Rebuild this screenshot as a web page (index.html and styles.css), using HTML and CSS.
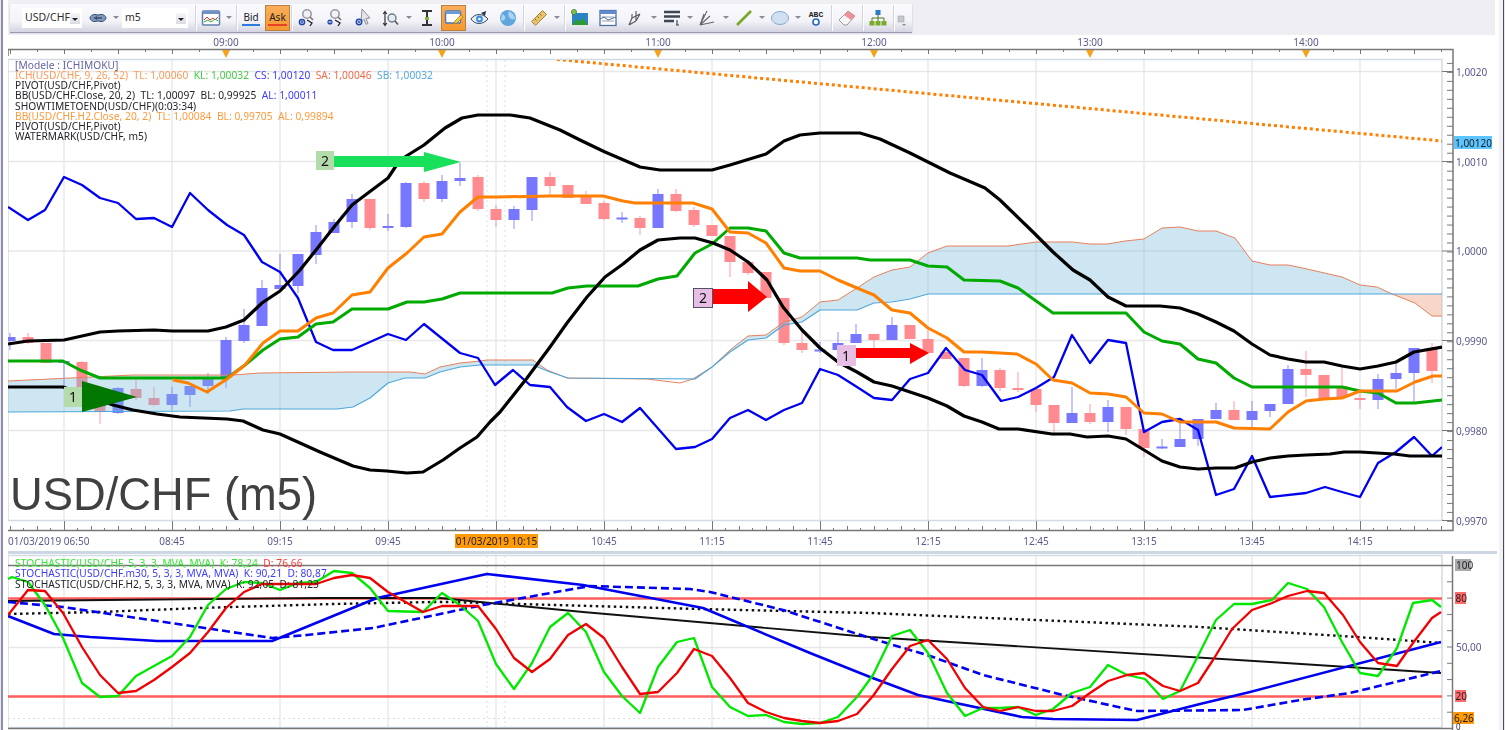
FILE: index.html
```html
<!DOCTYPE html>
<html lang="en">
<head>
    <meta charset="UTF-8">
    <title>USD/CHF m5</title>
    <link rel="stylesheet" href="styles.css">
</head>
<body>
<div class="app">
    <div class="edge-left"></div>
    <div class="content">

        <!-- top toolbar -->
        <div class="topband">
            <div class="toolbar">
                <div class="combo combo-pair">USD/CHF<span class="combo-arrow"></span></div>
                <div class="btn btn-link"><svg viewBox="0 0 20 20"><ellipse cx="7" cy="10" rx="5" ry="3.6" fill="#7f98bb" stroke="#3c557c"/><ellipse cx="13" cy="10" rx="5" ry="3.6" fill="#7f98bb" stroke="#3c557c"/><path d="M6 10h8" stroke="#223" stroke-width="1"/></svg></div>
                <span class="dd"></span>
                <div class="combo combo-tf">m5<span class="combo-arrow"></span></div>
                <span class="sep sep-first"></span>
                <div class="btn"><svg viewBox="0 0 20 20"><rect x="1.5" y="3" width="17" height="14" rx="1" fill="#fff" stroke="#5f80ad" stroke-width="1.5"/><rect x="1.5" y="3" width="17" height="3" fill="#6f93c4"/><path d="M3 12l3-3 3 3 3-2 2 2 3-3" fill="none" stroke="#d83a3a"/><path d="M3 14l4-2 3 2 4-3 3 2" fill="none" stroke="#3aa83a"/></svg></div>
                <span class="dd dd-end"></span>
                <span class="sep"></span>
                <div class="btn btn-bid"><span class="price-side side-bid">Bid</span></div>
                <div class="btn btn-on btn-ask"><span class="price-side side-ask">Ask</span></div>
                <span class="sep"></span>
                <div class="btn"><svg viewBox="0 0 20 20"><circle cx="10" cy="6" r="4.2" fill="#f2f2f6" stroke="#9a9aa4" stroke-width="1.6"/><path d="M13 9l3 3" stroke="#777" stroke-width="1.6"/><circle cx="5" cy="14" r="2.6" fill="#fff" stroke="#1f46a8" stroke-width="1.5"/><path d="M3.5 14h3M5 12.5v3" stroke="#1f46a8"/><path d="M10 12l5 3-2 3" fill="none" stroke="#223" stroke-width="1.3"/></svg></div>
                <div class="btn"><svg viewBox="0 0 20 20"><circle cx="10" cy="6" r="4.2" fill="#f2f2f6" stroke="#9a9aa4" stroke-width="1.6"/><path d="M13 9l3 3" stroke="#777" stroke-width="1.6"/><circle cx="5" cy="14" r="2.6" fill="#1f46a8"/><path d="M3.5 14h3" stroke="#fff"/><path d="M10 12l5 3-2 3" fill="none" stroke="#223" stroke-width="1.3"/></svg></div>
                <div class="btn"><svg viewBox="0 0 20 20"><path d="M9 1l8 9-4 .5 2 5-2 .8-2-5-3 3z" fill="#e4e4ea" stroke="#8f8f99"/><circle cx="6" cy="14" r="2.7" fill="#fff" stroke="#1f46a8" stroke-width="1.5"/><path d="M4.5 14h3M6 12.500v3" stroke="#1f46a8"/></svg></div>
                <div class="btn"><svg viewBox="0 0 20 20"><path d="M4 4v13M2.200 6L4 3.500 5.800 6M2.200 15L4 17.500 5.800 15" fill="none" stroke="#333" stroke-width="1.200"/><circle cx="11" cy="10" r="4" fill="#e4edf5" stroke="#6b7a86" stroke-width="1.400"/><path d="M14 13l3 3.500" stroke="#555" stroke-width="1.600"/></svg></div>
                <span class="dd"></span>
                <div class="btn"><svg viewBox="0 0 20 20"><path d="M5 3h10M5 17h10" stroke="#333" stroke-width="1.800"/><path d="M10 3v14" stroke="#333" stroke-width="2"/><path d="M8 9h4v3H8z" fill="#7fb23a"/></svg></div>
                <div class="btn btn-on btn-note"><svg viewBox="0 0 20 20"><rect x="1.500" y="3" width="15" height="12" rx="1" fill="#fff" stroke="#4a78b8" stroke-width="1.500"/><rect x="1.500" y="3" width="15" height="3" fill="#6f9ad4"/><path d="M10 16l1-3 6-6 2 2-6 6z" fill="#f7c93a" stroke="#a8791c" stroke-width=".8"/></svg></div>
                <div class="btn"><svg viewBox="0 0 20 20"><path d="M1 11c4-6 12-6 17 0-5 6-13 6-17 0z" fill="#e6edf5" stroke="#3a4a60"/><circle cx="9.500" cy="11" r="3.400" fill="#3f8fdc"/><circle cx="9.500" cy="11" r="1.300" fill="#fff"/><path d="M11 5l5-2-1 5z" fill="#22304a"/></svg></div>
                <div class="btn"><svg viewBox="0 0 20 20"><circle cx="10" cy="10" r="8" fill="#5ea6dc"/><path d="M4 6c3 1 4 3 3 5s-3 2-4 1M11 3c3 2 6 4 6 8-2 1-5 0-6-2s-1-4 0-6z" fill="#a9d3ef"/></svg></div>
                <span class="sep"></span>
                <div class="btn"><svg viewBox="0 0 20 20"><path d="M13.500 2.500l4 4-11 11-4-4z" fill="#e8c26a" stroke="#a8873a"/><path d="M11 6l1.500 1.500M8.500 8.500L10 10M6 11l1.500 1.500" stroke="#8a6a22"/></svg></div>
                <span class="dd dd-end"></span>
                <span class="sep"></span>
                <div class="btn"><svg viewBox="0 0 20 20"><rect x="2" y="5" width="16" height="12" fill="#2b82c4"/><path d="M2 17l5-6 3 3 3-4 5 7z" fill="#2e9a2e"/><circle cx="4" cy="4" r="2.600" fill="#7fc24a" stroke="#3f7a1f" stroke-width=".7"/></svg></div>
                <div class="btn"><svg viewBox="0 0 20 20"><rect x="2" y="2.500" width="16" height="15" fill="#fff" stroke="#4a70a8" stroke-width="1.300"/><rect x="2" y="2.500" width="16" height="3.500" fill="#5f8bc8"/><path d="M4 9h12M4 13h12" stroke="#8aa0bc"/><path d="M2 11l4-2 4 3 8-3" fill="none" stroke="#5d6f88"/></svg></div>
                <div class="btn"><svg viewBox="0 0 20 20"><path d="M3 17l3-7M3 17l7-4M10 3v10M6 6v4M14 6l-4 7M10 8l4-2M6 10l4-2" fill="none" stroke="#55555c" stroke-width="1.100"/></svg></div>
                <span class="dd"></span>
                <div class="btn"><svg viewBox="0 0 20 20"><path d="M2 4h16M2 8.500h16M2 13h10" stroke="#3f4552" stroke-width="2.400"/><path d="M15 12v5M14 17h3" stroke="#3f4552" stroke-width="1.200"/></svg></div>
                <span class="dd"></span>
                <div class="btn"><svg viewBox="0 0 20 20"><path d="M2 17L9 3M2 17l10-9M2 17l14-3M2 17L6 6" fill="none" stroke="#66666e" stroke-width="1.100"/></svg></div>
                <span class="dd"></span>
                <div class="btn"><svg viewBox="0 0 20 20"><path d="M3 17L17 3" stroke="#78a82a" stroke-width="2.600"/></svg></div>
                <span class="dd"></span>
                <div class="btn"><svg viewBox="0 0 20 20"><ellipse cx="10" cy="10" rx="8.500" ry="6.500" fill="#cfe0f2" stroke="#8ba8c8"/></svg></div>
                <span class="dd"></span>
                <div class="btn btn-abc"><span class="abc">ABC</span><svg class="abc-dot" viewBox="0 0 8 8"><circle cx="4" cy="4" r="3" fill="#fff" stroke="#1f6ac8" stroke-width="1.600"/></svg></div>
                <span class="sep"></span>
                <div class="btn"><svg viewBox="0 0 20 20"><path d="M2 12l9-9 7 5-8 9H7z" fill="#f7f7f7" stroke="#9a9a9a"/><path d="M7 7l4-4 7 5-4 4z" fill="#ee8f9a"/></svg></div>
                <span class="sep"></span>
                <div class="btn"><svg viewBox="0 0 20 20"><rect x="7.500" y="2" width="5" height="5" fill="#2a78c8"/><path d="M10 7v3M4 13v-3h12v3M10 10v3" fill="none" stroke="#4a7a1f"/><rect x="1.500" y="13" width="5" height="4.500" fill="#7aaa2a"/><rect x="7.500" y="13" width="5" height="4.500" fill="#7aaa2a"/><rect x="13.500" y="13" width="5" height="4.500" fill="#7aaa2a"/></svg></div>
                <span class="sep"></span>
                <div class="grip"><svg viewBox="0 0 10 14"><rect x="1" y="2" width="6" height="6" fill="#c6c6ce" stroke="#a4a4ae" stroke-width=".6"/><path d="M5 10h4l-2 2z" fill="#88889a"/></svg></div>
            </div>
        </div>

        <!-- price chart -->
        <div class="pane pane-main">
            <svg class="chart" viewBox="8 35 1491 516">
                <defs>
                    <clipPath id="plot"><rect x="8" y="60" width="1434" height="460"/></clipPath>
                    <pattern id="topTicks" patternUnits="userSpaceOnUse" x="10" y="49" width="54" height="8">
                        <path class="tick" d="M.5 0v5M27.500 0v3"/>
                    </pattern>
                    <pattern id="bottomTicks" patternUnits="userSpaceOnUse" x="10" y="520" width="108" height="11">
                        <path class="tick" d="M54.500 1v10M27.500 6v5M81.500 6v5M.5 6v5M13.500 8v3M40.500 8v3M67.500 8v3M94.500 8v3"/>
                    </pattern>
                    <pattern id="priceTicks" patternUnits="userSpaceOnUse" x="1446" y="62.900" width="8" height="8.980">
                        <path class="tick" d="M1 .5h6"/>
                    </pattern>
                </defs>

                <!-- top time ruler -->
                <text class="axis-text" x="226" y="45.500" text-anchor="middle">09:00</text>
                <text class="axis-text" x="442" y="45.500" text-anchor="middle">10:00</text>
                <text class="axis-text" x="658" y="45.500" text-anchor="middle">11:00</text>
                <text class="axis-text" x="874" y="45.500" text-anchor="middle">12:00</text>
                <text class="axis-text" x="1090" y="45.500" text-anchor="middle">13:00</text>
                <text class="axis-text" x="1306" y="45.500" text-anchor="middle">14:00</text>
                <rect x="10" y="49" width="1440" height="6" fill="url(#topTicks)"/>
                <path class="axis" d="M8 56V49.500H1453V531M8 530.500H1453"/>
                <path class="marker" d="M222 50h8l-4 8zM438 50h8l-4 8zM654 50h8l-4 8zM870 50h8l-4 8zM1086 50h8l-4 8zM1302 50h8l-4 8z"/>

                <!-- plot background -->
                <path class="grid" d="M64 60V520M172 60V520M280 60V520M388 60V520M496 60V520M604 60V520M712 60V520M820 60V520M928 60V520M1036 60V520M1144 60V520M1252 60V520M1360 60V520"/>
                <path class="grid" d="M8 71.500H1442M8 161.500H1442M8 251H1442M8 340.500H1442M8 430.500H1442"/>
                <path class="cursor" d="M487 60V520M505 60V520"/>
                <rect class="frame" x="8" y="59.500" width="1434" height="461"/>

                <g clip-path="url(#plot)">
                    <!-- candles -->
                    <path class="wick wick-red" d="M28 333V344M82 361V388M100 390V424M136 377V400M154 387V406M370 199V230M424 181V202M478 175V211M496 205V227M550 172V195M586 191V204M604 201V220M640 216V235M676 189V212M694 207V227M730 236V277M748 262V275M784 298V345M802 330V353M874 334V348M928 330V353M964 358V387M1000 368V391M1018 372V392M1036 389V412M1054 405V436M1090 404V424M1126 407V435M1144 429V457M1234 401V420M1306 351V397M1342 365V397M1360 392V409M1432 343V383"/>
                    <path class="wick wick-blue" d="M10 333V350M64 361V387M118 387V414M172 387V410M190 386V407M208 373V394M226 337V388M244 309V343M262 280V326M280 254V289M298 254V293M316 225V264M334 219V233M352 194V228M388 214V231M406 182V228M442 175V202M460 163V186M514 206V229M532 177V221M622 212V223M658 189V228M820 342V353M838 332V350M856 324V343M892 317V340M982 358V387M1072 387V423M1108 400V432M1162 439V449M1180 420V447M1198 419V446M1216 403V419M1252 401V430M1270 404V417M1288 365V404M1378 374V409M1396 363V389M1414 348V402"/>
                    <path class="body body-red" d="M28 337V343M46 343V363M82 362V387M100 395V412M136 389V398M154 398V405M370 199V228M424 183V199M478 177V209M496 209V220M550 177V186M568 185V198M586 195V204M604 203V219M640 218V228M676 194V211M694 210V225M712 225V236M730 236V262M748 262V273M766 272V298M784 298V343M802 343V350M874 334V340M910 325V339M928 339V353M946 352V359M964 358V386M1000 370V388M1018 388V390M1036 389V405M1054 405V423M1090 413V422M1126 407V429M1144 429V448M1234 410V420M1306 369V375M1324 375V398M1342 386V397M1360 398V400M1432 348V371"/>
                    <path class="body body-blue" d="M10 337V341M64 361V363M118 388V413M172 394V405M190 386V395M208 377V386M226 340V378M244 325V341M262 288V326M280 285V289M298 254V286M316 232V255M334 222V233M352 199V222M388 226V228M406 183V227M442 181V199M460 178V181M514 209V220M532 177V210M622 217.500V219.500M658 194V228M820 349.500V351.500M838 343V350M856 334V343M892 325V340M982 370V386M1072 413V423M1108 407V422M1162 446.500V448.500M1180 439V447M1198 419V439M1216 410V419M1252 411V420M1270 404V411M1288 369V404M1378 379V400M1396 373V379M1414 348V373"/>

                    <!-- ichimoku cloud -->
                    <path class="cloud" d="M8 381 133 375 233 375 260 373 350 372 410 372 425 374 440 367 460 363 480 361 487 360 533 360 547 370 567 378 693 378 712 367 730 350 748 336 766 335 784 322 802 317 820 302 838 300 857 288 874 277 892 270 910 267 928 253 947 246 1008 246 1036 242 1072 242 1090 244 1108 244 1125 241 1144 239 1162 228 1180 227 1198 231 1216 231 1235 238 1252 261 1270 265 1288 265 1307 269 1342 277 1360 285 1377 287 1392 294 928 294 910 299 892 302 874 303 857 310 820 310 802 322 784 325 766 338 748 340 730 352 712 367 695 379 568 378 550 372 533 365 487 365 480 365 460 367 440 372 425 378 405 378 388 383 370 398 353 407 337 409 243 409 230 411 8 412z"/>
                    <path class="cloud-low" d="M1392 294 1415 303 1432 316 1442 316V294z"/>
                    <polyline class="span-a" points="8,381 133,375 233,375 260,373 350,372 410,372 425,374 440,367 460,363 480,361 487,360 533,360 547,370 567,378 647,379 680,383 693,379 712,367 730,350 748,336 766,335 784,322 802,317 820,302 838,300 857,288 874,277 892,270 910,267 928,253 947,246 1008,246 1036,242 1072,242 1090,244 1108,244 1125,241 1144,239 1162,228 1180,227 1198,231 1216,231 1235,238 1252,261 1270,265 1288,265 1307,269 1342,277 1360,285 1377,287 1392,294 1415,303 1432,316 1442,316"/>
                    <polyline class="span-b" points="8,412 230,411 243,409 337,409 353,407 370,398 388,383 405,378 425,378 440,372 460,367 480,365 487,365 533,365 550,372 568,378 695,379 712,367 730,352 748,340 766,338 784,325 802,322 820,310 857,310 874,303 892,302 910,299 928,294 1442,294"/>

                    <!-- chikou -->
                    <polyline class="line-blue" points="8,207 28,220 45,210 64,177 82,185 100,198 118,203 136,219 154,218 172,227 190,193 208,210 227,225 244,235 262,262 280,272 298,298 316,342 333,350 352,350 388,334 406,340 424,324 460,353 478,358 495,385 513,370 530,385 550,387 567,407 586,421 604,414 622,422 640,408 676,449 695,447 712,439 730,418 748,410 766,420 784,410 802,403 820,369 838,375 857,387 874,398 892,400 910,379 928,373 946,348 965,370 982,375 1001,401 1018,397 1036,388 1054,377 1072,335 1090,363 1108,340 1126,343 1144,432 1162,422 1180,419 1198,430 1216,495 1234,489 1252,456 1270,497 1306,493 1325,487 1342,492 1360,497 1378,463 1396,452 1414,437 1432,456 1442,447"/>
                    <!-- kijun and tenkan -->
                    <polyline class="line-green" points="8,361 63,361 80,370 100,378 227,378 245,365 263,350 280,339 298,337 316,324 333,322 352,309 388,309 407,302 424,302 442,299 460,293 552,293 568,288 587,286 638,286 658,279 677,276 695,253 712,244 730,228 748,228 766,231 784,253 800,258 857,258 870,260 910,260 928,266 947,267 964,280 1000,281 1018,288 1053,313 1126,313 1144,332 1162,341 1180,344 1198,359 1216,363 1234,378 1252,387 1342,387 1360,391 1378,393 1396,403 1415,403 1442,400"/>
                    <polyline class="line-orange" points="173,380 188,383 207,392 227,379 245,365 263,343 280,331 298,331 316,318 333,313 352,295 370,292 388,268 407,253 424,237 442,234 460,212 478,197 497,197 550,196 603,196 623,201 635,203 693,203 712,209 730,232 748,233 766,243 784,268 800,271 820,271 838,280 857,288 874,295 892,310 910,313 928,328 947,338 964,352 982,352 1000,353 1017,354 1036,364 1053,380 1072,383 1090,393 1108,394 1126,397 1144,413 1162,414 1180,422 1216,422 1234,428 1270,429 1288,412 1306,401 1324,399 1342,398 1360,391 1397,391 1415,382 1433,376 1442,376"/>
                    <!-- bollinger bands -->
                    <polyline class="line-black" points="8,344 28,341 64,340 100,332 118,331 154,330 172,331 208,331 226,327 244,320 262,303 280,291 300,270 316,250 334,227 352,205 388,178 400,160 424,145 445,128 462,118 478,115 510,115 530,118 560,130 580,140 605,152 640,167 660,170 712,170 730,165 766,154 784,141 800,135 820,133 860,133 880,139 910,153 950,173 985,188 1000,200 1033,232 1053,252 1073,270 1090,280 1108,297 1126,306 1160,306 1180,308 1198,314 1216,322 1234,331 1252,344 1270,355 1288,359 1306,362 1324,362 1342,366 1360,369 1378,366 1396,362 1414,352 1442,347"/>
                    <polyline class="line-black" points="8,387 63,387 113,405 133,410 157,414 180,417 227,419 243,421 263,430 280,434 300,443 320,452 353,466 370,470 387,471 407,473 423,472 443,460 460,448 477,437 490,422 500,412 527,378 550,347 567,323 587,297 605,277 623,264 640,250 658,240 680,238 695,238 713,243 730,250 748,262 767,280 783,307 802,330 820,348 838,362 857,372 874,382 892,386 910,392 928,398 947,406 964,416 982,422 999,429 1018,429 1052,434 1070,434 1087,437 1108,436 1126,439 1144,450 1162,461 1180,467 1198,469 1216,468 1235,468 1252,462 1270,458 1288,456 1306,455 1330,454 1344,452 1360,452 1377,453 1394,454 1410,456 1442,456"/>
                    <!-- trend line -->
                    <line class="line-trend" x1="557" y1="59.500" x2="1442" y2="141"/>

                    <text class="watermark" x="10" y="510">USD/CHF (m5)</text>

                    <!-- drawn signals -->
                    <rect class="tag tag-green" x="64" y="387" width="18" height="20"/>
                    <text class="tag-text" x="73" y="402" text-anchor="middle">1</text>
                    <path class="arrow-dark" d="M82 381V412L137 397z"/>
                    <rect class="tag tag-green" x="316" y="151" width="18" height="19"/>
                    <text class="tag-text" x="325" y="166" text-anchor="middle">2</text>
                    <path class="arrow-lime" d="M334 156H424V152L461 162 424 172V167H334z"/>
                    <rect class="tag tag-pink tag-line" x="693.500" y="288.500" width="19" height="19"/>
                    <text class="tag-text" x="703" y="303" text-anchor="middle">2</text>
                    <path class="arrow-red" d="M713 289H748V281L767 297 748 312V304H713z"/>
                    <rect class="tag tag-pink" x="837" y="345" width="19" height="21"/>
                    <text class="tag-text" x="846" y="361" text-anchor="middle">1</text>
                    <path class="arrow-red" d="M856 348H910V343L929 353 910 364V358H856z"/>
                </g>

                <!-- price axis -->
                <rect x="1446" y="60" width="8" height="470" fill="url(#priceTicks)"/>
                <path class="tick" d="M1442 71.500H1453M1442 161.500H1453M1442 251H1453M1442 340.500H1453M1442 430.500H1453M1442 520.500H1453"/>
                <text class="axis-text" x="1456" y="75.500">1,0020</text>
                <text class="axis-text" x="1456" y="165.500">1,0010</text>
                <text class="axis-text" x="1456" y="255">1,0000</text>
                <text class="axis-text" x="1456" y="344.500">0,9990</text>
                <text class="axis-text" x="1456" y="434.500">0,9980</text>
                <text class="axis-text" x="1456" y="524.500">0,9970</text>
                <rect class="price-box" x="1454" y="136" width="38" height="13"/>
                <text class="axis-text axis-dark" x="1455" y="146.500">1,00120</text>

                <!-- bottom time axis -->
                <rect x="10" y="520" width="1440" height="11" fill="url(#bottomTicks)"/>
                <text class="axis-text" x="8" y="545">01/03/2019 06:50</text>
                <text class="axis-text" x="172" y="545" text-anchor="middle">08:45</text>
                <text class="axis-text" x="280" y="545" text-anchor="middle">09:15</text>
                <text class="axis-text" x="388" y="545" text-anchor="middle">09:45</text>
                <rect class="time-box" x="455" y="534" width="83" height="14"/>
                <text class="axis-text axis-dark" x="496.500" y="545" text-anchor="middle">01/03/2019 10:15</text>
                <text class="axis-text" x="604" y="545" text-anchor="middle">10:45</text>
                <text class="axis-text" x="712" y="545" text-anchor="middle">11:15</text>
                <text class="axis-text" x="820" y="545" text-anchor="middle">11:45</text>
                <text class="axis-text" x="928" y="545" text-anchor="middle">12:15</text>
                <text class="axis-text" x="1036" y="545" text-anchor="middle">12:45</text>
                <text class="axis-text" x="1144" y="545" text-anchor="middle">13:15</text>
                <text class="axis-text" x="1252" y="545" text-anchor="middle">13:45</text>
                <text class="axis-text" x="1360" y="545" text-anchor="middle">14:15</text>
            </svg>

            <div class="legend legend-main">
                <div class="c-title">[Modele : ICHIMOKU]</div>
                <div><span class="c-ich">ICH(USD/CHF, 9, 26, 52)&nbsp; TL: 1,00060</span>&nbsp; <span class="c-kl">KL: 1,00032</span>&nbsp; <span class="c-cs">CS: 1,00120</span>&nbsp; <span class="c-sa">SA: 1,00046</span>&nbsp; <span class="c-sb">SB: 1,00032</span></div>
                <div>PIVOT(USD/CHF,Pivot)</div>
                <div>BB(USD/CHF.Close, 20, 2)&nbsp; TL: 1,00097&nbsp; BL: 0,99925&nbsp; <span class="c-cs">AL: 1,00011</span></div>
                <div>SHOWTIMETOEND(USD/CHF)(0:03:34)</div>
                <div class="c-bb2">BB(USD/CHF.H2.Close, 20, 2)&nbsp; TL: 1,00084&nbsp; BL: 0,99705&nbsp; AL: 0,99894</div>
                <div>PIVOT(USD/CHF,Pivot)</div>
                <div>WATERMARK(USD/CHF, m5)</div>
            </div>
        </div>

        <div class="divider"></div>

        <!-- stochastic pane -->
        <div class="pane pane-sub">
            <svg class="chart" viewBox="8 554 1491 176">
                <defs>
                    <clipPath id="plotSub"><rect x="8" y="556" width="1434" height="172"/></clipPath>
                    <pattern id="subTicks" patternUnits="userSpaceOnUse" x="1446" y="565" width="8" height="16.300">
                        <path class="tick" d="M1 .5h6"/>
                    </pattern>
                </defs>
                <path class="grid" d="M64 556V728M172 556V728M280 556V728M388 556V728M496 556V728M604 556V728M712 556V728M820 556V728M928 556V728M1036 556V728M1144 556V728M1252 556V728M1360 556V728"/>
                <path class="grid" d="M8 647.500H1442"/>
                <path class="cursor" d="M487 556V728M505 556V728M8 718.500H1442"/>
                <rect class="frame" x="8" y="555.500" width="1434" height="172"/>
                <path class="axis" d="M8 565.500H1453M8 728.500H1453M1452.500 556V730"/>
                <path class="level" d="M8 598.500H1442M8 696.500H1442"/>

                <g clip-path="url(#plotSub)">
                    <polyline class="stoch-black" points="8,601 107,600 323,598 440,598 500,604 583,612 870,637 1270,662 1441,673"/>
                    <polyline class="stoch-dotted" points="8,614 100,612 200,608 333,604 433,602 450,602 590,606 700,609 870,613 1037,620 1200,627 1357,637 1441,643"/>
                    <polyline class="stoch-blue" points="8,616 54,634 90,637 157,641 272,641 377,598 487,574 583,585 703,608 810,653 870,677 918,695 1022,717 1053,719 1137,720 1200,704 1250,692 1441,642"/>
                    <polyline class="stoch-dashed" points="8,602 63,607 272,638 307,635 373,628 483,605 590,586 690,589 710,592 783,610 870,638 930,656 983,675 1063,695 1137,711 1243,710 1300,700 1350,693 1441,671"/>
                    <polyline class="stoch-green" points="8,579 12,577 28,582 45,605 63,638 82,683 100,697 118,696 136,676 154,666 172,656 190,637 208,605 226,589 244,582 262,583 280,590 298,583 316,582 334,571 352,573 370,588 388,611 423,612 442,593 460,605 478,621 496,664 514,689 532,663 550,627 568,613 586,632 604,672 622,696 640,713 658,667 677,642 694,638 712,687 730,707 748,716 766,715 784,722 802,724 820,723 838,717 857,697 873,675 892,636 910,630 928,653 947,693 965,716 983,708 1000,708 1018,707 1036,715 1053,709 1072,693 1090,687 1108,665 1127,675 1145,679 1163,699 1180,691 1197,658 1216,620 1234,604 1252,604 1272,600 1288,583 1307,589 1324,607 1342,642 1360,673 1378,676 1397,648 1413,603 1432,600 1441,607"/>
                    <polyline class="stoch-red" points="8,615 28,590 45,591 63,613 82,647 100,675 118,693 136,691 154,680 172,667 190,653 208,632 226,608 244,592 262,584 316,584 334,578 352,575 370,578 388,592 423,612 442,606 478,606 496,629 514,658 532,672 550,659 568,635 586,624 604,638 622,667 640,694 658,692 677,673 694,649 712,656 730,678 748,703 766,712 784,718 802,721 820,723 838,721 857,714 873,696 892,669 910,646 928,640 947,659 965,688 983,707 1000,711 1018,707 1036,711 1053,711 1072,706 1090,693 1108,681 1127,675 1144,673 1163,686 1180,691 1198,683 1213,660 1232,629 1252,610 1272,603 1288,596 1307,591 1324,593 1343,615 1360,642 1378,663 1397,666 1413,643 1432,618 1441,612"/>
                </g>

                <rect x="1446" y="565" width="8" height="163" fill="url(#subTicks)"/>
                <rect class="lvl-box lvl-gray" x="1455" y="559" width="16" height="12"/>
                <text class="axis-text axis-dark" x="1456" y="569">100</text>
                <rect class="lvl-box lvl-red" x="1455" y="592" width="11" height="12"/>
                <text class="axis-text axis-dark" x="1455.500" y="602">80</text>
                <text class="axis-text" x="1456" y="651">50,00</text>
                <rect class="lvl-box lvl-red" x="1455" y="690" width="11" height="12"/>
                <text class="axis-text axis-dark" x="1455.500" y="700">20</text>
                <rect class="lvl-box lvl-orange" x="1453" y="712" width="21" height="12"/>
                <text class="axis-text axis-dark" x="1454" y="722">6,26</text>
                <text class="axis-text axis-dark axis-zero" x="1456" y="729.500">0</text>
            </svg>

            <div class="legend legend-sub">
                <div class="c-lime">STOCHASTIC(USD/CHF, 5, 3, 3, MVA, MVA)&nbsp; K: 78,24&nbsp; <span class="c-red">D: 76,66</span></div>
                <div class="c-cs">STOCHASTIC(USD/CHF.m30, 5, 3, 3, MVA, MVA)&nbsp; K: 90,21&nbsp; D: 80,87</div>
                <div>STOCHASTIC(USD/CHF.H2, 5, 3, 3, MVA, MVA)&nbsp; K: 92,05&nbsp; D: 81,23</div>
            </div>
        </div>
    </div>
    <div class="edge-right"></div>
</div>
</body>
</html>
```

FILE: styles.css
```css
html, body {
    margin: 0;
    padding: 0;
    background: #fff;
    overflow: hidden;
}

body {
    font-family: "Noto Sans", "Liberation Sans", sans-serif;
    color: #2c2c34;
}

.app {
    display: flex;
    width: 1505px;
    height: 730px;
    filter: blur(.35px);
}

.edge-left {
    width: 8px;
    flex: none;
    background: linear-gradient(90deg, #e8e8ee 0, #e8e8ee 1px, #8c8cac 1px, #8c8cac 3px, #fff 3px);
}

.content {
    width: 1491px;
    flex: none;
}

.edge-right {
    flex: 1;
    background: linear-gradient(90deg, #f2f2f5 0, #f2f2f5 4px, #4a4a58 4px, #4a4a58 5px, #e8e8ee 5px);
}

/* toolbar */
.topband {
    height: 31px;
    margin-right: 4px;
    padding: 4px 0 0 2px;
    background: #eeeef3;
}

.toolbar {
    display: flex;
    align-items: center;
    width: 902px;
    height: 28px;
    padding-left: 12px;
    box-sizing: border-box;
    background: linear-gradient(#fbfbfe, #f3f3f8 60%, #d4d4e2);
    box-shadow: 0 1px 1px #9a9ab0;
}

.combo {
    position: relative;
    height: 20px;
    line-height: 19px;
    padding-left: 3px;
    box-sizing: border-box;
    background: #fff;
    font-size: 10.5px;
    color: #2c2c34;
}

.combo-pair { width: 60px; }
.combo-tf { width: 66px; margin-left: 2px; }

.combo-arrow {
    position: absolute;
    right: 2px;
    top: 5px;
    width: 10px;
    height: 11px;
    background: linear-gradient(#f6f6f8, #dcdce4);
}

.combo-arrow::after {
    content: "";
    position: absolute;
    left: 2px;
    top: 5px;
    border: 3px solid transparent;
    border-top: 3px solid #222;
    border-bottom: 0;
}

.btn {
    position: relative;
    flex: none;
    display: flex;
    align-items: center;
    justify-content: center;
    width: 28px;
    height: 24px;
}

.btn svg {
    width: 20px;
    height: 20px;
}

.btn-link { margin-left: 2px; }
.btn-bid { width: 26px; }
.btn-ask { width: 25px; margin-left: 1px; }
.btn-note { width: 25px; }

.btn-on {
    box-sizing: border-box;
    height: 26px;
    background: linear-gradient(#f9ae5c, #f7982f);
    border: 1px solid #b9803c;
}

.price-side {
    font-size: 10px;
    line-height: 12px;
    color: #22222c;
    padding: 0 1px 1px;
}

.side-bid { border-bottom: 2px solid #2a7ae0; }
.side-ask { border-bottom: 2px solid #e8402a; }

.abc {
    font: bold 8px "Liberation Mono", monospace;
    color: #222;
    margin-top: -8px;
}

.btn-abc .abc-dot {
    position: absolute;
    left: 10px;
    top: 12px;
    width: 8px;
    height: 8px;
}

.dd {
    position: relative;
    flex: none;
    width: 12px;
    height: 10px;
    margin: 0 -2px;
}

.dd::after {
    content: "";
    position: absolute;
    left: 3px;
    top: 3px;
    border: 3px solid transparent;
    border-top: 3px solid #8a8a96;
    border-bottom: 0;
}

.dd-end { margin-right: 0; }

.sep {
    flex: none;
    width: 1px;
    height: 26px;
    margin: 0 1px;
    background: #d4d4de;
    box-shadow: 1px 0 0 #fff;
}

.sep-first { margin-left: 7px; }

.grip {
    flex: none;
    width: 10px;
    height: 14px;
    margin-left: 2px;
}

.grip svg { width: 10px; height: 14px; }

/* panes */
.pane {
    position: relative;
}

.pane-main { height: 516px; }
.pane-sub { height: 176px; }

.divider {
    height: 3px;
    margin-right: 2px;
    background: #cdd7e3;
}

.chart {
    display: block;
    width: 1491px;
    height: 100%;
}

.legend {
    position: absolute;
    left: 7px;
    font-size: 10.2px;
    letter-spacing: .06px;
    line-height: 10.15px;
    color: #24242c;
    white-space: nowrap;
}

.legend-main { top: 25px; }
.legend-sub { top: 3.5px; line-height: 10.6px; }

.c-title { color: #6464a4; }
.c-ich { color: #ff9a55; }
.c-kl { color: #44cc44; }
.c-cs { color: #3c3cff; }
.c-sa { color: #f06a4a; }
.c-sb { color: #55aadd; }
.c-bb2 { color: #ff9a3c; }
.c-lime { color: #33e833; }
.c-red { color: #ff3c3c; }

/* chart drawing */
.axis-text {
    font-family: "Noto Sans", "Liberation Sans", sans-serif;
    font-size: 10px;
    fill: #5a5a8c;
}

.axis-dark { fill: #1c1c24; }
.axis-zero { font-size: 8px; }

.axis, .tick {
    fill: none;
    stroke: #777;
    stroke-width: 1;
}

.axis { stroke-width: 1.5; }

.marker { fill: #f5a01e; }

.grid {
    fill: none;
    stroke: #e7e7ea;
    stroke-width: 1.3;
}

.cursor {
    fill: none;
    stroke: #dcdcdc;
    stroke-width: 1;
    stroke-dasharray: 2 3;
}

.frame {
    fill: none;
    stroke: #d2dae4;
    stroke-width: 1.5;
}

.wick { fill: none; stroke-width: 1.2; opacity: .7; }
.wick-red { stroke: #ff8a90; }
.wick-blue { stroke: #7878ff; }

.body { fill: none; stroke-width: 11; }
.body-red { stroke: #ff8a90; }
.body-blue { stroke: #7676ff; }

.cloud { fill: #7dbbdc; fill-opacity: .38; }
.cloud-low { fill: #eeb79c; fill-opacity: .55; }
.span-a { fill: none; stroke: #e8805a; stroke-width: 1; }
.span-b { fill: none; stroke: #4ea8d8; stroke-width: 1.2; }

polyline {
    fill: none;
    stroke-linejoin: round;
}

.line-blue { stroke: #0000f0; stroke-width: 2.3; }
.line-green { stroke: #00aa00; stroke-width: 3; }
.line-orange { stroke: #ff7f00; stroke-width: 3; }
.line-black { stroke: #000; stroke-width: 3.2; }
.line-trend { stroke: #ff7f00; stroke-width: 3; stroke-dasharray: 3 3; }

.watermark {
    font-family: "Liberation Sans", Arial, sans-serif;
    font-size: 45.3px;
    fill: #404040;
}

.tag-green { fill: #b4dcaa; }
.tag-pink { fill: #e8bfe4; }
.tag-line { stroke: #55506a; stroke-width: 1; }

.tag-text {
    font-family: "Noto Sans", "Liberation Sans", sans-serif;
    font-size: 14px;
    fill: #101014;
}

.arrow-dark { fill: #007800; }
.arrow-lime { fill: #18e05a; }
.arrow-red { fill: #ff0000; }

.price-box { fill: #5cc4ff; }
.time-box { fill: #ff9a0a; }

.level { fill: none; stroke: #ff5c5c; stroke-width: 2.4; }

.stoch-green { stroke: #00e800; stroke-width: 2.3; }
.stoch-red { stroke: #f00000; stroke-width: 2.3; }
.stoch-blue { stroke: #0000f0; stroke-width: 2.6; }
.stoch-dashed { stroke: #0000f0; stroke-width: 2.6; stroke-dasharray: 8 4; }
.stoch-black { stroke: #111; stroke-width: 1.8; }
.stoch-dotted { stroke: #111; stroke-width: 2.4; stroke-dasharray: 2.5 3.5; }

.lvl-gray { fill: #aaaaaa; }
.lvl-red { fill: #ff6a6a; }
.lvl-orange { fill: #ff9a0a; }
```
